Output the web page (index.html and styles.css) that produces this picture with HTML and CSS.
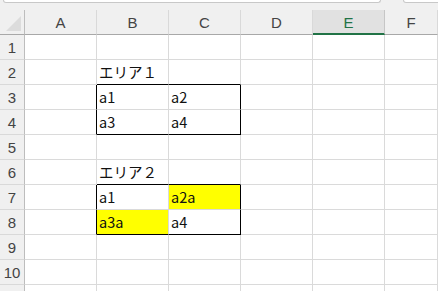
FILE: index.html
```html
<!DOCTYPE html>
<html lang="ja">
<head>
    <meta charset="UTF-8">
    <title>Sheet1</title>
    <link rel="stylesheet" href="styles.css">
</head>
<body>
    <div class="topbar">
        <div class="box box-main"></div>
        <div class="box box-side"></div>
    </div>

    <div class="sheet">
        <!-- column headers -->
        <div class="row head-row">
            <div class="corner"><span class="tri"></span></div>
            <div class="ch">A</div>
            <div class="ch">B</div>
            <div class="ch">C</div>
            <div class="ch">D</div>
            <div class="ch active">E</div>
            <div class="ch">F</div>
        </div>

        <div class="row">
            <div class="rh">1</div>
            <div class="cell"></div>
            <div class="cell"></div>
            <div class="cell"></div>
            <div class="cell"></div>
            <div class="cell"></div>
            <div class="cell"></div>
        </div>
        <div class="row">
            <div class="rh">2</div>
            <div class="cell"></div>
            <div class="cell bk-b">エリア１</div>
            <div class="cell bk-b"></div>
            <div class="cell"></div>
            <div class="cell"></div>
            <div class="cell"></div>
        </div>
        <div class="row">
            <div class="rh">3</div>
            <div class="cell bk-r"></div>
            <div class="cell">a1</div>
            <div class="cell bk-r">a2</div>
            <div class="cell"></div>
            <div class="cell"></div>
            <div class="cell"></div>
        </div>
        <div class="row">
            <div class="rh">4</div>
            <div class="cell bk-r"></div>
            <div class="cell bk-b">a3</div>
            <div class="cell bk-r bk-b">a4</div>
            <div class="cell"></div>
            <div class="cell"></div>
            <div class="cell"></div>
        </div>
        <div class="row">
            <div class="rh">5</div>
            <div class="cell"></div>
            <div class="cell"></div>
            <div class="cell"></div>
            <div class="cell"></div>
            <div class="cell"></div>
            <div class="cell"></div>
        </div>
        <div class="row">
            <div class="rh">6</div>
            <div class="cell"></div>
            <div class="cell bk-b">エリア２</div>
            <div class="cell bk-b"></div>
            <div class="cell"></div>
            <div class="cell"></div>
            <div class="cell"></div>
        </div>
        <div class="row">
            <div class="rh">7</div>
            <div class="cell bk-r"></div>
            <div class="cell">a1</div>
            <div class="cell bk-r yellow">a2a</div>
            <div class="cell"></div>
            <div class="cell"></div>
            <div class="cell"></div>
        </div>
        <div class="row">
            <div class="rh">8</div>
            <div class="cell bk-r"></div>
            <div class="cell bk-b yellow">a3a</div>
            <div class="cell bk-r bk-b">a4</div>
            <div class="cell"></div>
            <div class="cell"></div>
            <div class="cell"></div>
        </div>
        <div class="row">
            <div class="rh">9</div>
            <div class="cell"></div>
            <div class="cell"></div>
            <div class="cell"></div>
            <div class="cell"></div>
            <div class="cell"></div>
            <div class="cell"></div>
        </div>
        <div class="row">
            <div class="rh">10</div>
            <div class="cell"></div>
            <div class="cell"></div>
            <div class="cell"></div>
            <div class="cell"></div>
            <div class="cell"></div>
            <div class="cell"></div>
        </div>
        <!-- row 11, only its top edge is in view -->
        <div class="row">
            <div class="rh"></div>
            <div class="cell"></div>
            <div class="cell"></div>
            <div class="cell"></div>
            <div class="cell"></div>
            <div class="cell"></div>
            <div class="cell"></div>
        </div>
    </div>
</body>
</html>
```

FILE: styles.css
```css
body {
    margin: 0;
    background: #f0f0f0;
    font-family: "Noto Sans CJK JP", "Noto Sans", sans-serif;
    overflow: hidden;
}
.topbar {
    height: 10px;
    display: flex;
    align-items: flex-start;
}
.box {
    height: 2px;
    background: #fff;
    border: 1px solid #c8c8c8;
    border-top: none;
    border-radius: 0 0 4px 4px;
}
.box-main {
    margin-left: 3px;
    width: 376px;
}
.box-side {
    margin-left: 22px;
    flex: 1;
    margin-right: -4px;
}
.sheet {
    display: flex;
    flex-direction: column;
}
.row {
    display: grid;
    grid-template-columns: 25px repeat(5, 72px) 1fr;
    height: 25px;
}
.row > div {
    box-sizing: border-box;
}
.head-row .ch {
    background: #f0f0f0;
    border-right: 1px solid #d9d9d9;
    border-bottom: 1px solid #a8a8a8;
    color: #444;
    font-family: "Liberation Sans", Arial, sans-serif;
    font-size: 15px;
    display: flex;
    align-items: center;
    justify-content: center;
    padding-top: 1px;
}
.head-row .ch.active {
    background: #e1e1e1;
    color: #217346;
    border-bottom: 2px solid #217346;
    border-right-color: #c6c6c6;
}
.corner {
    background: #f0f0f0;
    border-right: 1px solid #bdbdbd;
    border-bottom: 1px solid #a8a8a8;
    position: relative;
}
.tri {
    position: absolute;
    right: 3px;
    bottom: 3px;
    width: 0;
    height: 0;
    border-left: 15px solid transparent;
    border-bottom: 15px solid #dcdcdc;
}
.rh {
    background: #f0f0f0;
    border-right: 1px solid #bdbdbd;
    border-bottom: 1px solid #d9d9d9;
    color: #444;
    font-family: "Liberation Sans", Arial, sans-serif;
    font-size: 15px;
    display: flex;
    align-items: center;
    justify-content: center;
    padding-top: 1px;
}
.cell {
    background: #fff;
    border-right: 1px solid #dadada;
    border-bottom: 1px solid #dadada;
    color: #111;
    font-size: 14.5px;
    line-height: 24px;
    padding-left: 2px;
    white-space: nowrap;
}
.cell.bk-r {
    border-right-color: #000;
}
.cell.bk-b {
    border-bottom-color: #000;
}
.cell.yellow {
    background: #ffff00;
}
```
